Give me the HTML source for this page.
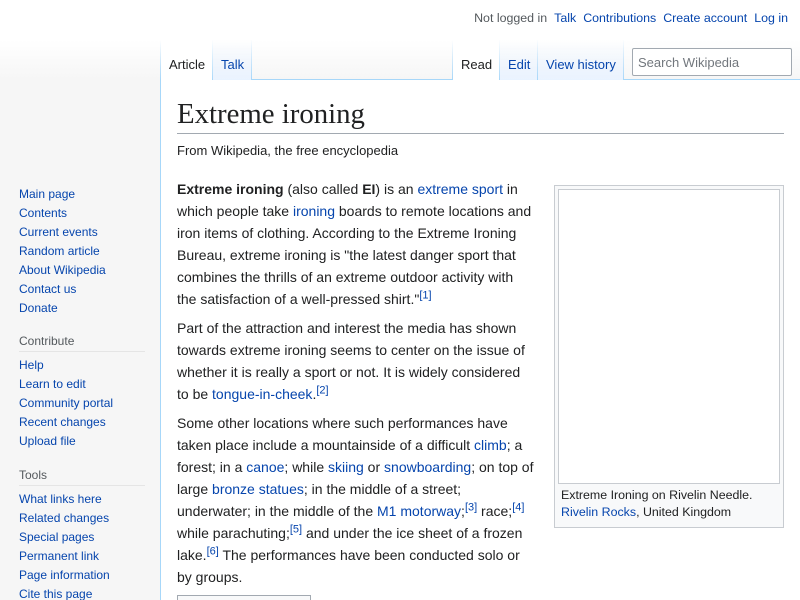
<!DOCTYPE html>
<html style="overflow:hidden;height:600px"><head><meta charset="utf-8"><style>
*{margin:0;padding:0;box-sizing:border-box}
body{width:800px;height:600px;overflow:hidden;background:linear-gradient(to bottom,#fff 0,#fff 40px,#f6f6f6 80px,#f6f6f6 100%);font-family:"Liberation Sans",sans-serif;color:#202122;position:relative}
a{color:#0645ad;text-decoration:none}
.abs{position:absolute}
#personal{top:11px;right:12px;font-size:12.4px;white-space:nowrap}
#personal span,#personal a{margin-left:7px}
#personal span{color:#54595d}
.tab{position:absolute;top:40px;height:40px;font-size:13px;padding:17px 8px 0;white-space:nowrap;background:linear-gradient(to bottom,rgba(234,243,255,0) 0,#eaf3ff 100%);border-right:1px solid;border-image:linear-gradient(to bottom,rgba(167,215,249,0),#a7d7f9) 1}
.tab.sel{background:#fff;color:#202122}
#content{position:absolute;left:160px;top:79px;width:640px;height:521px;background:#fff;border:1px solid #a7d7f9;border-right:0;border-bottom:0}
h1{position:absolute;left:177px;top:96px;width:607px;font-family:"Liberation Serif",serif;font-weight:normal;font-size:28.8px;line-height:36px;border-bottom:1px solid #a2a9b1;padding-bottom:1px}
#sub{left:177px;top:143px;font-size:13px}
.p{position:absolute;left:177px;font-size:14px;line-height:22px;white-space:nowrap}
sup{font-size:11px;line-height:1;vertical-align:super}
.side{left:19px;font-size:12px;line-height:19px}
.h{font-size:12px;color:#54595d;border-bottom:1px solid #e5e5e5;width:126px;padding-bottom:1px;margin-bottom:4px;line-height:18px}
</style></head><body>
<div id="personal" class="abs"><span>Not logged in</span><a>Talk</a><a>Contributions</a><a>Create account</a><a>Log in</a></div>
<div id="content"></div>
<div class="abs" style="left:160px;top:40px;width:1px;height:40px;background:linear-gradient(to bottom,rgba(167,215,249,0),#a7d7f9)"></div>
<div class="tab sel" style="left:161px;width:52px">Article</div>
<div class="tab" style="left:213px;width:39px"><a>Talk</a></div>
<div class="abs" style="left:452px;top:40px;width:1px;height:40px;background:linear-gradient(to bottom,rgba(167,215,249,0),#a7d7f9)"></div>
<div class="tab sel" style="left:453px;width:47px">Read</div>
<div class="tab" style="left:500px;width:38px"><a>Edit</a></div>
<div class="tab" style="left:538px;width:86px"><a>View history</a></div>
<div class="abs" style="left:624px;top:79px;width:176px;height:1px;background:#a7d7f9"></div>
<div class="abs" style="left:632px;top:48px;width:160px;height:28px;border:1px solid #a2a9b1;border-radius:2px;background:#fff;font-size:13px;color:#72777d;padding:6px 5px">Search Wikipedia</div>
<h1>Extreme ironing</h1>
<div id="sub" class="abs">From Wikipedia, the free encyclopedia</div>
<div class="p" style="top:178px"><b>Extreme ironing</b> (also called <b>EI</b>) is an <a>extreme sport</a> in<br>which people take <a>ironing</a> boards to remote locations and<br>iron items of clothing. According to the Extreme Ironing<br>Bureau, extreme ironing is "the latest danger sport that<br>combines the thrills of an extreme outdoor activity with<br>the satisfaction of a well-pressed shirt."<sup><a>[1]</a></sup></div>
<div class="p" style="top:317px">Part of the attraction and interest the media has shown<br>towards extreme ironing seems to center on the issue of<br>whether it is really a sport or not. It is widely considered<br>to be <a>tongue-in-cheek</a>.<sup><a>[2]</a></sup></div>
<div class="p" style="top:412px">Some other locations where such performances have<br>taken place include a mountainside of a difficult <a>climb</a>; a<br>forest; in a <a>canoe</a>; while <a>skiing</a> or <a>snowboarding</a>; on top of<br>large <a>bronze statues</a>; in the middle of a street;<br>underwater; in the middle of the <a>M1 motorway</a>;<sup><a>[3]</a></sup> race;<sup><a>[4]</a></sup><br>while parachuting;<sup><a>[5]</a></sup> and under the ice sheet of a frozen<br>lake.<sup><a>[6]</a></sup> The performances have been conducted solo or<br>by groups.</div>
<div class="abs" style="left:177px;top:595px;width:134px;height:10px;border:1px solid #a2a9b1;background:#f8f9fa"></div>
<div class="abs" style="left:554px;top:185px;width:230px;height:343px;border:1px solid #c8ccd1;background:#f8f9fa">
<div style="margin:3px;height:295px;border:1px solid #c8ccd1;background:#fff"></div>
<div style="font-size:12.4px;line-height:17px;padding:0 6px">Extreme Ironing on Rivelin Needle.<br><a>Rivelin Rocks</a>, United Kingdom</div>
</div>
<div class="side abs" style="top:185px">
<a>Main page</a><br><a>Contents</a><br><a>Current events</a><br><a>Random article</a><br><a>About Wikipedia</a><br><a>Contact us</a><br><a>Donate</a>
</div>
<div class="side abs" style="top:332px"><div class="h">Contribute</div>
<a>Help</a><br><a>Learn to edit</a><br><a>Community portal</a><br><a>Recent changes</a><br><a>Upload file</a></div>
<div class="side abs" style="top:466px"><div class="h">Tools</div>
<a>What links here</a><br><a>Related changes</a><br><a>Special pages</a><br><a>Permanent link</a><br><a>Page information</a><br><a>Cite this page</a></div>
</body></html>
